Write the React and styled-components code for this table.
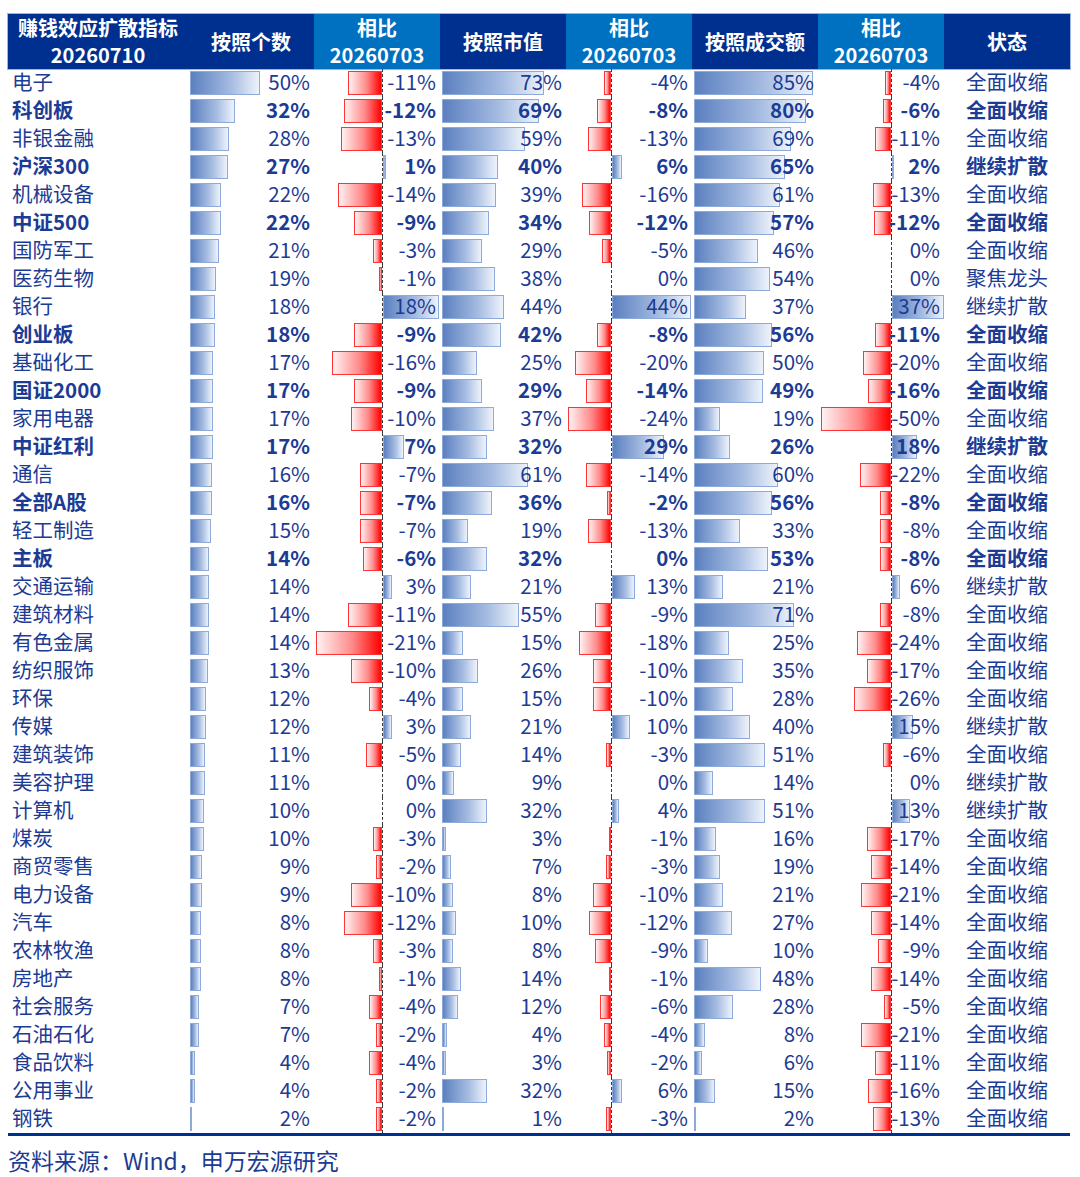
import React from 'react';
import styled, { createGlobalStyle } from 'styled-components';

const GlobalStyle = createGlobalStyle`
  body {
    margin: 0;
    background: #ffffff;
    font-family: "Noto Sans CJK SC", "Noto Sans", sans-serif;
  }
`;

const NAVY = '#00308f';
const TEXT = '#1c3b94';
const COLS = '180px repeat(7, 126px)';

// name, count, cmp1, marketValue, cmp2, amount, cmp3, status, bold
const rows = [
  ['电子', 50, -11, 73, -4, 85, -4, '全面收缩', false],
  ['科创板', 32, -12, 69, -8, 80, -6, '全面收缩', true],
  ['非银金融', 28, -13, 59, -13, 69, -11, '全面收缩', false],
  ['沪深300', 27, 1, 40, 6, 65, 2, '继续扩散', true],
  ['机械设备', 22, -14, 39, -16, 61, -13, '全面收缩', false],
  ['中证500', 22, -9, 34, -12, 57, -12, '全面收缩', true],
  ['国防军工', 21, -3, 29, -5, 46, 0, '全面收缩', false],
  ['医药生物', 19, -1, 38, 0, 54, 0, '聚焦龙头', false],
  ['银行', 18, 18, 44, 44, 37, 37, '继续扩散', false],
  ['创业板', 18, -9, 42, -8, 56, -11, '全面收缩', true],
  ['基础化工', 17, -16, 25, -20, 50, -20, '全面收缩', false],
  ['国证2000', 17, -9, 29, -14, 49, -16, '全面收缩', true],
  ['家用电器', 17, -10, 37, -24, 19, -50, '全面收缩', false],
  ['中证红利', 17, 7, 32, 29, 26, 18, '继续扩散', true],
  ['通信', 16, -7, 61, -14, 60, -22, '全面收缩', false],
  ['全部A股', 16, -7, 36, -2, 56, -8, '全面收缩', true],
  ['轻工制造', 15, -7, 19, -13, 33, -8, '全面收缩', false],
  ['主板', 14, -6, 32, 0, 53, -8, '全面收缩', true],
  ['交通运输', 14, 3, 21, 13, 21, 6, '继续扩散', false],
  ['建筑材料', 14, -11, 55, -9, 71, -8, '全面收缩', false],
  ['有色金属', 14, -21, 15, -18, 25, -24, '全面收缩', false],
  ['纺织服饰', 13, -10, 26, -10, 35, -17, '全面收缩', false],
  ['环保', 12, -4, 15, -10, 28, -26, '全面收缩', false],
  ['传媒', 12, 3, 21, 10, 40, 15, '继续扩散', false],
  ['建筑装饰', 11, -5, 14, -3, 51, -6, '全面收缩', false],
  ['美容护理', 11, 0, 9, 0, 14, 0, '继续扩散', false],
  ['计算机', 10, 0, 32, 4, 51, 13, '继续扩散', false],
  ['煤炭', 10, -3, 3, -1, 16, -17, '全面收缩', false],
  ['商贸零售', 9, -2, 7, -3, 19, -14, '全面收缩', false],
  ['电力设备', 9, -10, 8, -10, 21, -21, '全面收缩', false],
  ['汽车', 8, -12, 10, -12, 27, -14, '全面收缩', false],
  ['农林牧渔', 8, -3, 8, -9, 10, -9, '全面收缩', false],
  ['房地产', 8, -1, 14, -1, 48, -14, '全面收缩', false],
  ['社会服务', 7, -4, 12, -6, 28, -5, '全面收缩', false],
  ['石油石化', 7, -2, 4, -4, 8, -21, '全面收缩', false],
  ['食品饮料', 4, -4, 3, -2, 6, -11, '全面收缩', false],
  ['公用事业', 4, -2, 32, 6, 15, -16, '全面收缩', false],
  ['钢铁', 2, -2, 1, -3, 2, -13, '全面收缩', false],
];

// axis offset inside the cell and px per percent for each 相比 column
const CMP = [
  { axis: 68, scale: 3.13 },
  { axis: 45, scale: 1.8 },
  { axis: 73, scale: 1.41 },
];
const LEVEL_SCALE = 1.41;

const Page = styled.div`
  width: 1062px;
  padding: 14px 0 0 8px;
`;

const Head = styled.div`
  display: grid;
  grid-template-columns: ${COLS};
  height: 55px;
  outline: 1px solid #9fb4dd;
`;

const HeadCell = styled.div`
  display: flex;
  flex-direction: column;
  align-items: center;
  justify-content: center;
  padding-bottom: 2px;
  background: ${(p) => (p.$light ? '#0070c0' : NAVY)};
  color: #ffffff;
  font-weight: 700;
  font-size: 20px;
  line-height: 27px;
  text-align: center;
`;

const Body = styled.div`
  border-bottom: 3px solid ${NAVY};
`;

const Row = styled.div`
  display: grid;
  grid-template-columns: ${COLS};
  grid-template-rows: 28px;
  height: 28px;
  color: ${TEXT};
  font-size: 20.5px;
  font-weight: ${(p) => (p.$bold ? 700 : 400)};
`;

const NameCell = styled.div`
  display: flex;
  align-items: center;
  padding-left: 4px;
  white-space: nowrap;
`;

const BarCell = styled.div`
  position: relative;
  display: flex;
  align-items: center;
  justify-content: flex-end;
  padding-right: 4px;
`;

const StatusCell = styled.div`
  display: flex;
  align-items: center;
  justify-content: center;
`;

const Bar = styled.div`
  position: absolute;
  top: 2px;
  height: 24px;
  box-sizing: border-box;
  border: 1px solid ${(p) => (p.$neg ? '#ff3434' : '#8eaadb')};
  background: ${(p) =>
    p.$neg
      ? 'linear-gradient(90deg, #fff2f2 0%, #ff8a8a 55%, #ff0000 100%)'
      : 'linear-gradient(90deg, #5b80c0 0%, #a7bde2 60%, #eef3fb 100%)'};
`;

const Axis = styled.div`
  position: absolute;
  top: 0;
  bottom: 0;
  width: 1px;
  background: repeating-linear-gradient(180deg, #3a3a3a 0 3px, transparent 3px 5px);
`;

const Text = styled.span`
  position: relative;
  top: -1.5px;
  line-height: 1;
`;

const Source = styled.div`
  margin-top: 10px;
  font-size: 23px;
  line-height: 28px;
  color: ${TEXT};
`;

const LevelCell = ({ value }) => (
  <BarCell>
    {value > 0 && <Bar style={{ left: 1.5, width: value * LEVEL_SCALE }} />}
    <Text>{value}%</Text>
  </BarCell>
);

const CompareCell = ({ value, axis, scale }) => {
  const w = Math.abs(value) * scale;
  return (
    <BarCell>
      {value !== 0 && (
        <Bar $neg={value < 0} style={{ left: value < 0 ? axis - w : axis + 0.5, width: w }} />
      )}
      <Axis style={{ left: axis }} />
      <Text>{value}%</Text>
    </BarCell>
  );
};

const App = () => (
  <>
    <GlobalStyle />
    <Page>
      <Head>
        <HeadCell>
          <span>赚钱效应扩散指标</span>
          <span>20260710</span>
        </HeadCell>
        <HeadCell>按照个数</HeadCell>
        <HeadCell $light>
          <span>相比</span>
          <span>20260703</span>
        </HeadCell>
        <HeadCell>按照市值</HeadCell>
        <HeadCell $light>
          <span>相比</span>
          <span>20260703</span>
        </HeadCell>
        <HeadCell>按照成交额</HeadCell>
        <HeadCell $light>
          <span>相比</span>
          <span>20260703</span>
        </HeadCell>
        <HeadCell>状态</HeadCell>
      </Head>
      <Body>
        {rows.map(([name, count, c1, mv, c2, amt, c3, status, bold]) => (
          <Row key={name} $bold={bold}>
            <NameCell>
              <Text>{name}</Text>
            </NameCell>
            <LevelCell value={count} />
            <CompareCell value={c1} {...CMP[0]} />
            <LevelCell value={mv} />
            <CompareCell value={c2} {...CMP[1]} />
            <LevelCell value={amt} />
            <CompareCell value={c3} {...CMP[2]} />
            <StatusCell>
              <Text>{status}</Text>
            </StatusCell>
          </Row>
        ))}
      </Body>
      <Source>资料来源：Wind，申万宏源研究</Source>
    </Page>
  </>
);

export default App;
